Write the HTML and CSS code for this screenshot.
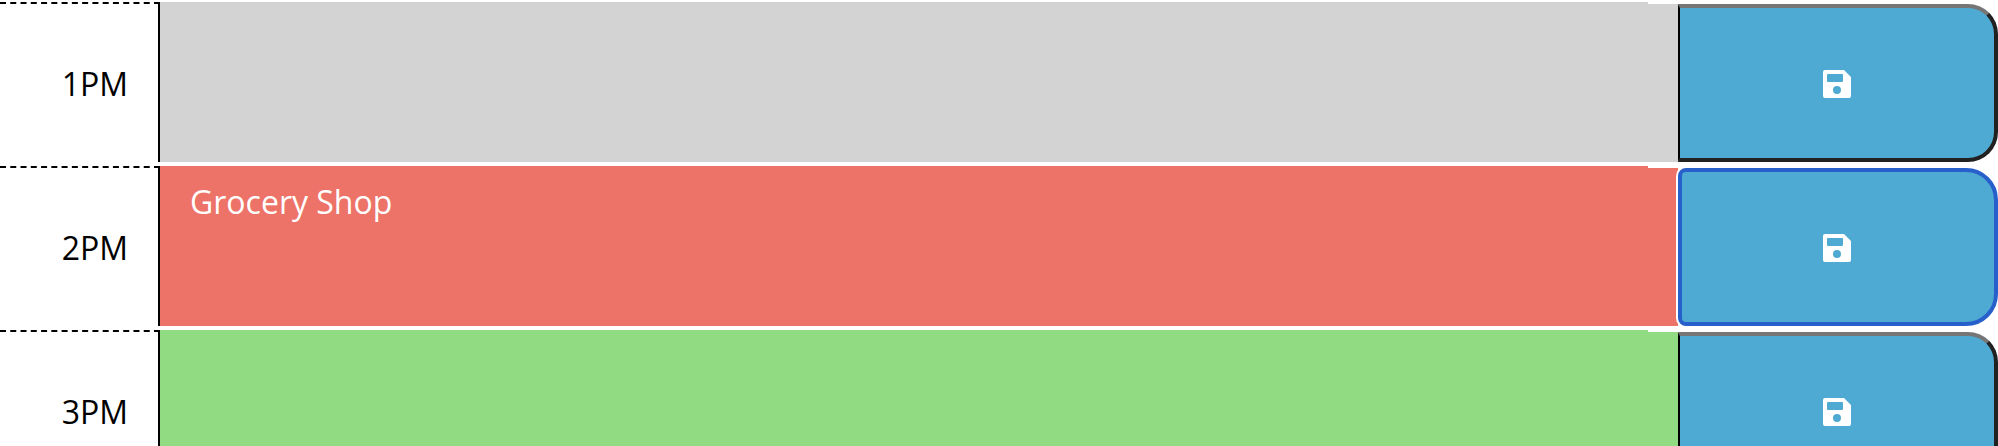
FILE: index.html
```html
<!DOCTYPE html>
<html lang="en">
<head>
<meta charset="utf-8">
<meta name="viewport" content="width=device-width, initial-scale=1">
<title>Work Day Scheduler</title>
<link rel="stylesheet" href="styles.css">
</head>
<body>
<svg class="sprite" aria-hidden="true">
  <symbol id="save" viewBox="0 0 28 28">
    <path fill="currentColor" fill-rule="evenodd" d="M2 0H21L28 7V26Q28 28 26 28H2Q0 28 0 26V2Q0 0 2 0ZM5 4Q4 4 4 5V11Q4 12 5 12H19Q20 12 20 11V5Q20 4 19 4ZM14 16A4 4 0 1 0 14 24A4 4 0 1 0 14 16Z"/>
  </symbol>
</svg>
<main class="schedule">
  <div class="time-block past">
    <label class="hour" for="hour-13">1PM</label>
    <textarea class="description" id="hour-13"></textarea>
    <button class="save" type="button" aria-label="Save 1PM"><svg class="icon"><use href="#save"/></svg></button>
  </div>
  <div class="time-block present">
    <label class="hour" for="hour-14">2PM</label>
    <textarea class="description" id="hour-14" spellcheck="false">Grocery Shop</textarea>
    <button class="save active" type="button" aria-label="Save 2PM"><svg class="icon"><use href="#save"/></svg></button>
  </div>
  <div class="time-block future">
    <label class="hour" for="hour-15">3PM</label>
    <textarea class="description" id="hour-15"></textarea>
    <button class="save" type="button" aria-label="Save 3PM"><svg class="icon"><use href="#save"/></svg></button>
  </div>
</main>
</body>
</html>
```
FILE: styles.css
```css
* {
  box-sizing: border-box;
}

body {
  margin: 0;
  overflow: hidden;
  background: #fff;
  color: #000;
  font-family: "Open Sans", "Noto Sans", sans-serif;
  font-size: 32px;
  line-height: 48px;
}

.sprite {
  display: none;
}

.schedule {
  display: flex;
  flex-direction: column;
  gap: 4px;
  padding-top: 2px;
}

.time-block {
  display: grid;
  grid-template-columns: 160px 1fr 320px;
  min-height: 160px;
}

.hour {
  display: flex;
  align-items: center;
  justify-content: flex-end;
  padding: 2px 30px 0 0;
  border-top: 2px dashed #000;
  border-right: 2px solid #000;
}

.description {
  display: block;
  width: 100%;
  margin: 0;
  padding: 12px 30px;
  border: 0;
  border-radius: 0;
  outline: 0;
  resize: none;
  overflow: hidden;
  color: #fff;
  font: inherit;
  background: linear-gradient(#fff, #fff) top right / 30px 2px no-repeat var(--fill);
}

.past {
  --fill: #d3d3d3;
}

.present {
  --fill: #ed7368;
}

.future {
  --fill: #91dc83;
}

.save {
  display: flex;
  align-items: center;
  justify-content: center;
  margin: 2px 0 0;
  padding: 2px 0 0;
  border: 4px solid #212121;
  border-top-color: #767676;
  border-left: 2px solid #000;
  border-radius: 0 30px 30px 0;
  background: #4eaad2;
  color: #fff;
  cursor: pointer;
}

.save.active {
  padding-right: 2px;
  border: 4px solid #275fcb;
  border-radius: 8px 32px 32px 8px;
  box-shadow: 0 0 0 2px #fff;
}

.icon {
  display: block;
  width: 28px;
  height: 28px;
}
```
